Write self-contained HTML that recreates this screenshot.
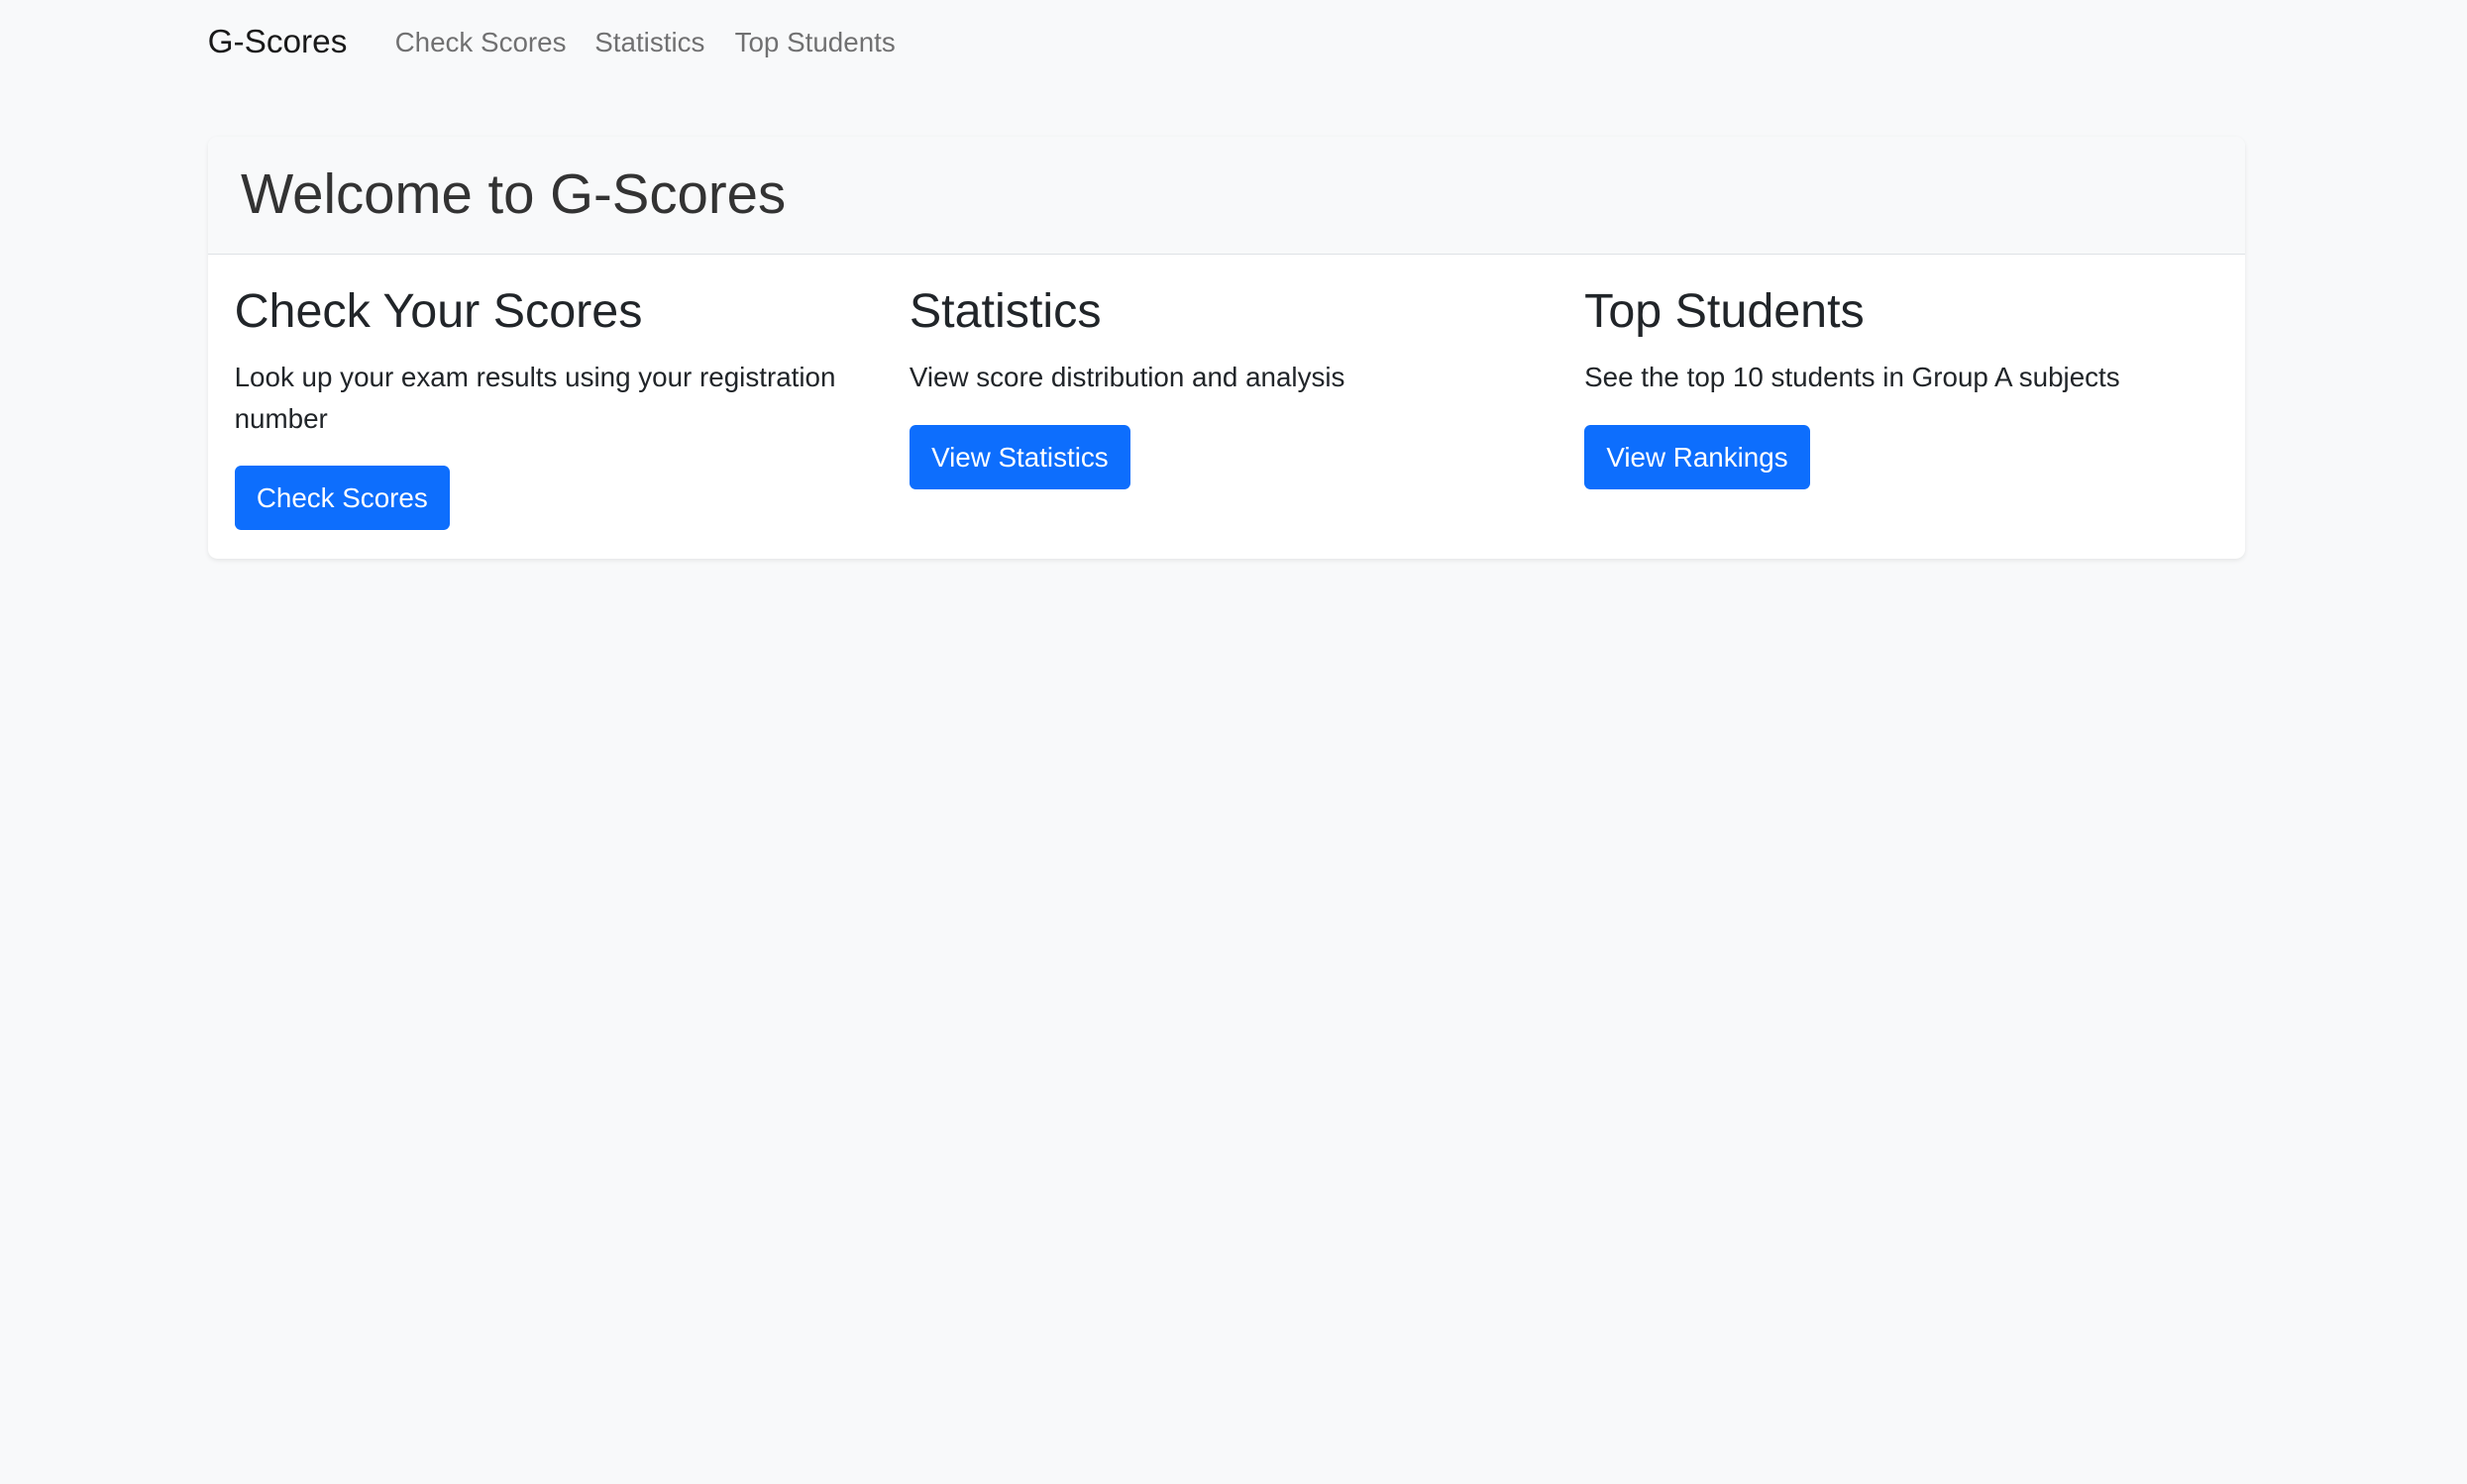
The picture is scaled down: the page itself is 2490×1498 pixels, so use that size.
<!DOCTYPE html>
<html><head><meta charset="utf-8"><style>
html,body{margin:0;padding:0;background:#f8f9fa;}
body{width:2490px;height:1498px;overflow:hidden;font-family:"Liberation Sans",Arial,sans-serif;}
#w{zoom:1.588;width:1568px;height:943px;position:relative;color:#212529;}
.brand{position:absolute;left:132px;top:13px;font-size:21px;line-height:28px;color:rgba(0,0,0,.9);}
.nl{position:absolute;top:15px;font-size:17.5px;line-height:24px;color:rgba(0,0,0,.55);}
.card{position:absolute;left:132px;top:87px;width:1295px;height:268px;background:#fff;border-radius:6px;box-shadow:0 1px 3px rgba(0,0,0,.08);overflow:hidden;}
.hd{height:74px;background:#f8f9fa;border-bottom:1px solid #dee2e6;position:relative;}
.hd h1{position:absolute;left:21px;top:15px;margin:0;font-weight:400;font-size:35.5px;line-height:43px;color:#333;}
.col{position:absolute;top:75px;width:410px;}
.col h3{margin:18px 0 0;font-weight:400;font-size:30.5px;line-height:36px;}
.col p{margin:11px 0 0;font-size:17.5px;line-height:26px;}
.btn{position:absolute;background:#0d6efd;color:#fff;font-size:17.5px;line-height:41px;height:41px;padding:0 14px;border-radius:4px;}
</style></head><body><div id="w">
<div class="brand">G-Scores</div>
<div class="nl" style="left:251px">Check Scores</div>
<div class="nl" style="left:378px">Statistics</div>
<div class="nl" style="left:467px">Top Students</div>
<div class="card">
<div class="hd"><h1>Welcome to G-Scores</h1></div>
<div class="col" style="left:17px"><h3>Check Your Scores</h3><p>Look up your exam results using your registration number</p></div>
<div class="col" style="left:446px"><h3>Statistics</h3><p>View score distribution and analysis</p></div>
<div class="col" style="left:875px"><h3>Top Students</h3><p>See the top 10 students in Group A subjects</p></div>
<div class="btn" style="left:17px;top:209px">Check Scores</div>
<div class="btn" style="left:446px;top:183px">View Statistics</div>
<div class="btn" style="left:875px;top:183px">View Rankings</div>
</div>
</div></body></html>
